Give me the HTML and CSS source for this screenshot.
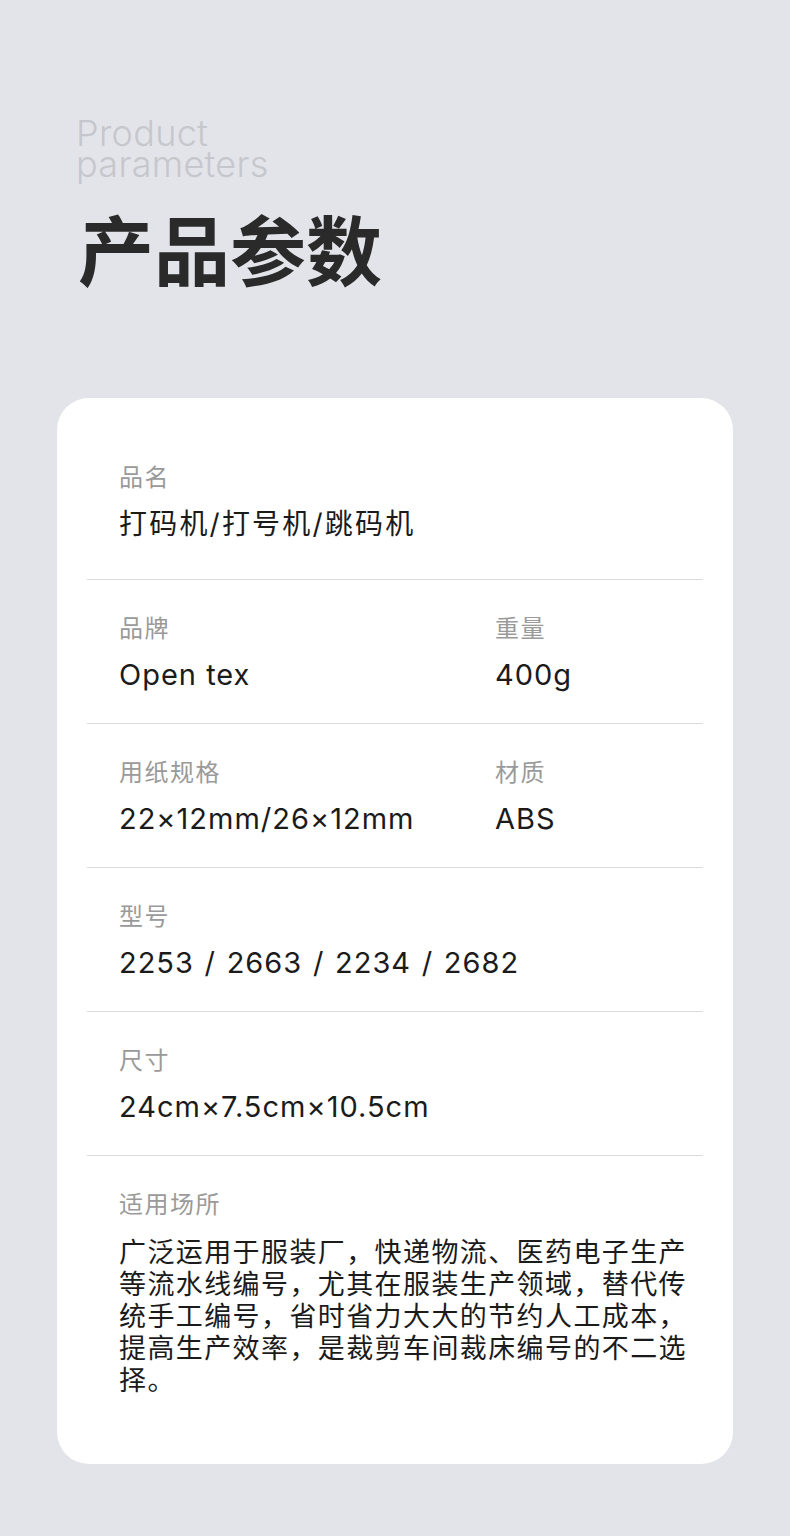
FILE: index.html
```html
<!DOCTYPE html>
<html lang="zh-CN">
<head>
<meta charset="utf-8">
<link rel="stylesheet" href="styles.css">
</head>
<body>
<div class="page">
  <header class="hero">
    <div class="en">Product<br>parameters</div>
    <h1 class="zh">产品参数</h1>
  </header>
  <section class="card">
    <div class="row row-first">
      <div class="cell">
        <div class="label">品名</div>
        <div class="value value-cjk">打码机/打号机/跳码机</div>
      </div>
    </div>
    <div class="row">
      <div class="cell">
        <div class="label">品牌</div>
        <div class="value">Open tex</div>
      </div>
      <div class="cell">
        <div class="label">重量</div>
        <div class="value">400g</div>
      </div>
    </div>
    <div class="row">
      <div class="cell">
        <div class="label">用纸规格</div>
        <div class="value">22×12mm/26×12mm</div>
      </div>
      <div class="cell">
        <div class="label">材质</div>
        <div class="value">ABS</div>
      </div>
    </div>
    <div class="row">
      <div class="cell">
        <div class="label">型号</div>
        <div class="value value-model">2253 / 2663 / 2234 / 2682</div>
      </div>
    </div>
    <div class="row">
      <div class="cell">
        <div class="label">尺寸</div>
        <div class="value">24cm×7.5cm×10.5cm</div>
      </div>
    </div>
    <div class="row row-last">
      <div class="cell">
        <div class="label">适用场所</div>
        <p class="desc">广泛运用于服装厂，快递物流、医药电子生产等流水线编号，尤其在服装生产领域，替代传统手工编号，省时省力大大的节约人工成本，提高生产效率，是裁剪车间裁床编号的不二选择。</p>
      </div>
    </div>
  </section>
</div>
</body>
</html>
```

FILE: styles.css
```css
* { box-sizing: border-box; }
html, body {
  margin: 0;
  padding: 0;
  background: #e3e4e9;
}
body {
  font-family: "Noto Sans CJK SC", "Noto Sans", sans-serif;
  width: 790px;
  height: 1536px;
  overflow: hidden;
}
.page {
  padding: 118px 57px 0 57px;
}
.hero {
  padding-left: 19px;
}
.en {
  font-family: Inter, "Noto Sans", sans-serif;
  font-weight: 300;
  font-size: 36px;
  line-height: 31px;
  color: #c6c7cc;
  letter-spacing: 0.3px;
}
.zh {
  margin: 22px 0 0 2px;
  font-size: 76px;
  line-height: 90px;
  font-weight: 700;
  color: #2a2a2a;
  letter-spacing: 0;
}
.card {
  margin-top: 106px;
  background: #ffffff;
  border-radius: 32px;
  height: 1066px;
  padding: 0 30px;
}
.row {
  display: flex;
  padding: 31px 32px 30px;
  border-bottom: 1px solid #dcdcdf;
}
.row-first {
  padding-top: 62px;
  padding-bottom: 37px;
}
.row-last {
  border-bottom: none;
}
.cell {
  flex: 1 1 auto;
}
.cell:first-child:not(:last-child) {
  flex: 0 0 376px;
}
.label {
  font-size: 24px;
  line-height: 32px;
  color: #9a9a9a;
  letter-spacing: 1.5px;
}
.value {
  margin-top: 14px;
  font-family: Inter, "Noto Sans CJK SC", sans-serif;
  font-size: 29px;
  line-height: 36px;
  color: #1b1b1b;
  letter-spacing: 1px;
  white-space: nowrap;
}
.value-cjk {
  font-size: 28px;
  letter-spacing: 2.2px;
}
.value-model {
  word-spacing: 1.5px;
}
.desc {
  margin: 16px 0 0;
  width: 580px;
  font-size: 27px;
  line-height: 32px;
  letter-spacing: 1.4px;
  color: #1b1b1b;
}
```
